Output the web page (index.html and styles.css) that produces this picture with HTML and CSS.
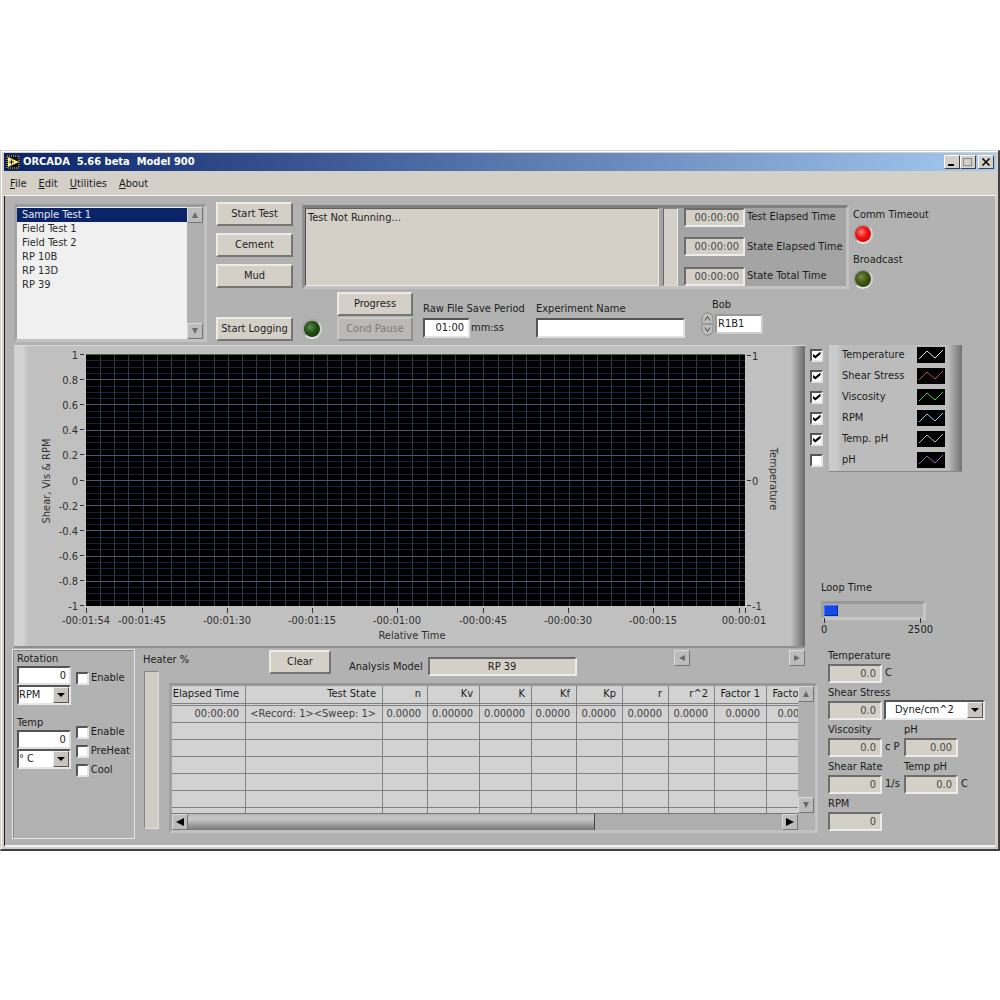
FILE: index.html
```html
<!DOCTYPE html>
<html lang="en">
<head>
<meta charset="utf-8">
<meta name="viewport" content="width=device-width, initial-scale=1">
<title>ORCADA 5.66 beta Model 900</title>
<link rel="stylesheet" href="styles.css">
</head>
<body>
<div class="window">
  <header class="titlebar">
    <svg class="app-icon" width="14" height="14" viewBox="0 0 14 14" aria-hidden="true">
      <rect width="14" height="14" fill="#111"/>
      <rect x="1" y="1" width="12" height="12" fill="none" stroke="#e8e4b0" stroke-dasharray="1 1"/>
      <path d="M2 2v10l11-5z" fill="#f4ef8a"/>
      <path d="M3 7h5M5.500 4.500v5" stroke="#222"/>
    </svg>
    <h1 class="title">ORCADA  5.66 beta  Model 900</h1>
    <button class="win-btn" aria-label="Minimize"><svg width="12" height="10" viewBox="0 0 12 10"><path d="M2 7h6v2H2z"/></svg></button>
    <button class="win-btn" aria-label="Maximize"><svg width="12" height="10" viewBox="0 0 12 10"><path d="M1 1.500h9M1.500 1v8M9.500 1v8M1 8.500h9" stroke="#8c8c88" fill="none"/></svg></button>
    <button class="win-btn win-close" aria-label="Close"><svg width="12" height="10" viewBox="0 0 12 10"><path d="M2.500 1.500l7 7M9.500 1.500l-7 7" stroke="#000" stroke-width="1.500"/></svg></button>
  </header>
  <nav class="menubar">
    <a href="#file"><u>F</u>ile</a>
    <a href="#edit"><u>E</u>dit</a>
    <a href="#utilities"><u>U</u>tilities</a>
    <a href="#about"><u>A</u>bout</a>
  </nav>

  <main class="client">
    <section class="top">
      <div class="listbox">
        <select size="9" aria-label="Tests">
          <option selected>Sample Test 1</option>
          <option>Field Test 1</option>
          <option>Field Test 2</option>
          <option>RP 10B</option>
          <option>RP 13D</option>
          <option>RP 39</option>
        </select>
        <div class="vscroll">
          <button class="arrow dim" aria-label="Scroll up"><svg width="8" height="8" viewBox="0 0 8 8"><path d="M4 1l3 6H1z"/></svg></button>
          <button class="arrow dim" aria-label="Scroll down"><svg width="8" height="8" viewBox="0 0 8 8"><path d="M4 7L1 1h6z"/></svg></button>
        </div>
      </div>

      <div class="commands">
        <button class="btn">Start Test</button>
        <button class="btn">Cement</button>
        <button class="btn">Mud</button>
        <button class="btn last">Start Logging</button>
      </div>

      <div class="center">
        <div class="status">
          <div class="status-text">Test Not Running...</div>
          <div class="status-bar"></div>
          <div class="times">
            <div><output id="t1" class="field">00:00:00</output><label for="t1">Test Elapsed Time</label></div>
            <div><output id="t2" class="field">00:00:00</output><label for="t2">State Elapsed Time</label></div>
            <div><output id="t3" class="field">00:00:00</output><label for="t3">State Total Time</label></div>
          </div>
        </div>
        <div class="controls">
          <span class="led green"></span>
          <div class="pair">
            <button class="btn">Progress</button>
            <button class="btn" disabled>Cond Pause</button>
          </div>
          <div class="group period">
            <label for="period">Raw File Save Period</label>
            <div class="inline"><input id="period" class="edit" value="01:00"><span>mm:ss</span></div>
          </div>
          <div class="group name">
            <label for="name">Experiment Name</label>
            <input id="name" class="edit">
          </div>
          <div class="group bob">
            <label for="bob">Bob</label>
            <div class="inline">
              <svg class="spin" width="13" height="24" viewBox="0 0 13 24" aria-hidden="true">
                <rect x="1" y="1" width="11" height="22" rx="5" fill="#bcbcbc" stroke="#8a8a8a"/>
                <path d="M2 12h9" stroke="#777"/>
                <path d="M4 8.500l2.500-4 2.500 4M4 15.500l2.500 4 2.500-4" fill="none" stroke="#444"/>
              </svg>
              <input id="bob" class="edit" value="R1B1">
            </div>
          </div>
        </div>
      </div>

      <div class="leds">
        <span>Comm Timeout</span>
        <span class="led red"></span>
        <span>Broadcast</span>
        <span class="led olive"></span>
      </div>
    </section>

    <section class="middle">
      <div class="chart">
        <svg viewBox="0 0 791 302" role="img" aria-label="Shear, Vis &amp; RPM against relative time">
          <rect x="72" y="9" width="659" height="252" fill="#000"/>
          <g id="grid"></g>
          <path d="M72 9.500h659" stroke="#3d6b3d"/>
          <path id="ticks" stroke="#333" fill="none"/>
          <g class="left-scale">
            <text x="64" y="14">1</text><text x="64" y="39">0.8</text><text x="64" y="64">0.6</text>
            <text x="64" y="89">0.4</text><text x="64" y="114">0.2</text><text x="64" y="140">0</text>
            <text x="64" y="165">-0.2</text><text x="64" y="190">-0.4</text><text x="64" y="215">-0.6</text>
            <text x="64" y="240">-0.8</text><text x="64" y="265">-1</text>
          </g>
          <g>
            <text x="738" y="15">1</text><text x="738" y="140">0</text><text x="738" y="265">-1</text>
          </g>
          <g class="time-scale">
            <text x="72" y="279">-00:01:54</text><text x="128" y="279">-00:01:45</text>
            <text x="213" y="279">-00:01:30</text><text x="298" y="279">-00:01:15</text>
            <text x="383" y="279">-00:01:00</text><text x="469" y="279">-00:00:45</text>
            <text x="554" y="279">-00:00:30</text><text x="639" y="279">-00:00:15</text>
            <text x="730" y="279">00:00:01</text>
            <text x="398" y="294">Relative Time</text>
            <text transform="translate(36 136) rotate(-90)">Shear, Vis &amp; RPM</text>
            <text transform="translate(756 134) rotate(90)">Temperature</text>
          </g>
        </svg>
      </div>
      <div class="side">
        <div class="legend">
          <div class="checks">
            <input type="checkbox" id="p1" checked><input type="checkbox" id="p2" checked>
            <input type="checkbox" id="p3" checked><input type="checkbox" id="p4" checked>
            <input type="checkbox" id="p5" checked><input type="checkbox" id="p6">
          </div>
          <div class="plots">
            <label for="p1">Temperature<svg viewBox="0 0 28 16"><path d="M2 12l8-8 8 7 8-8" stroke="#e0e0e0"/></svg></label>
            <label for="p2">Shear Stress<svg viewBox="0 0 28 16"><path d="M2 12l8-8 8 7 8-8" stroke="#c04848"/></svg></label>
            <label for="p3">Viscosity<svg viewBox="0 0 28 16"><path d="M2 12l8-8 8 7 8-8" stroke="#48d048"/></svg></label>
            <label for="p4">RPM<svg viewBox="0 0 28 16"><path d="M2 12l8-8 8 7 8-8" stroke="#88c8f0"/></svg></label>
            <label for="p5">Temp. pH<svg viewBox="0 0 28 16"><path d="M2 12l8-8 8 7 8-8" stroke="#b8b8a8"/></svg></label>
            <label for="p6">pH<svg viewBox="0 0 28 16"><path d="M2 12l8-8 8 7 8-8" stroke="#9868c0"/></svg></label>
          </div>
        </div>
        <div class="loop">
          <span>Loop Time</span>
          <div class="slide"><i></i></div>
          <div class="slide-scale"><span>0</span><span>2500</span></div>
        </div>
      </div>
    </section>

    <section class="bottom">
      <div class="setpoints">
        <div class="setpoint">
          <div>
            <label for="rot">Rotation</label>
            <input id="rot" class="edit num" value="0">
            <div class="combo"><select aria-label="Rotation unit"><option>RPM</option></select><span></span></div>
          </div>
          <div class="options one">
            <label><input type="checkbox">Enable</label>
          </div>
        </div>
        <div class="setpoint">
          <div>
            <label for="temp">Temp</label>
            <input id="temp" class="edit num" value="0">
            <div class="combo"><select aria-label="Temperature unit"><option>° C</option></select><span></span></div>
          </div>
          <div class="options">
            <label><input type="checkbox">Enable</label>
            <label><input type="checkbox">PreHeat</label>
            <label><input type="checkbox">Cool</label>
          </div>
        </div>
      </div>

      <div class="heater">
        <span>Heater %</span>
        <div class="heater-bar"></div>
      </div>

      <div class="analysis">
        <div class="analysis-head">
          <button class="btn">Clear</button>
          <label for="model">Analysis Model</label>
          <output id="model" class="field">RP 39</output>
          <div class="chart-scroll">
            <button class="arrow dim" aria-label="Scroll left"><svg width="8" height="8" viewBox="0 0 8 8"><path d="M1 4l6-3v6z"/></svg></button>
            <button class="arrow dim" aria-label="Scroll right"><svg width="8" height="8" viewBox="0 0 8 8"><path d="M7 4L1 1v6z"/></svg></button>
          </div>
        </div>
        <div class="grid-frame">
          <div class="grid-view">
            <table>
              <colgroup><col class="c74"><col class="c137"><col class="c45"><col class="c52"><col class="c52"><col class="c45"><col class="c46"><col class="c46"><col class="c46"><col class="c52"><col class="c52"></colgroup>
              <thead><tr><th>Elapsed Time</th><th>Test State</th><th>n</th><th>Kv</th><th>K</th><th>Kf</th><th>Kp</th><th>r</th><th>r^2</th><th>Factor 1</th><th>Factor 2</th></tr></thead>
              <tbody>
                <tr><td>00:00:00</td><td>&lt;Record: 1&gt;&lt;Sweep: 1&gt;</td><td>0.0000</td><td>0.00000</td><td>0.00000</td><td>0.0000</td><td>0.0000</td><td>0.0000</td><td>0.0000</td><td>0.0000</td><td>0.0000</td></tr>
                <tr><td></td><td></td><td></td><td></td><td></td><td></td><td></td><td></td><td></td><td></td><td></td></tr>
                <tr><td></td><td></td><td></td><td></td><td></td><td></td><td></td><td></td><td></td><td></td><td></td></tr>
                <tr><td></td><td></td><td></td><td></td><td></td><td></td><td></td><td></td><td></td><td></td><td></td></tr>
                <tr><td></td><td></td><td></td><td></td><td></td><td></td><td></td><td></td><td></td><td></td><td></td></tr>
                <tr><td></td><td></td><td></td><td></td><td></td><td></td><td></td><td></td><td></td><td></td><td></td></tr>
                <tr><td></td><td></td><td></td><td></td><td></td><td></td><td></td><td></td><td></td><td></td><td></td></tr>
              </tbody>
            </table>
          </div>
          <div class="vscroll">
            <button class="arrow dim" aria-label="Scroll up"><svg width="8" height="8" viewBox="0 0 8 8"><path d="M4 1l3 6H1z"/></svg></button>
            <button class="arrow dim" aria-label="Scroll down"><svg width="8" height="8" viewBox="0 0 8 8"><path d="M4 7L1 1h6z"/></svg></button>
          </div>
          <div class="hscroll">
            <button class="arrow" aria-label="Scroll left"><svg width="8" height="8" viewBox="0 0 8 8"><path d="M0 4l8-4v8z"/></svg></button>
            <i></i>
            <button class="arrow" aria-label="Scroll right"><svg width="8" height="8" viewBox="0 0 8 8"><path d="M8 4L0 0v8z"/></svg></button>
          </div>
        </div>
      </div>

      <div class="readouts">
        <div class="row">
          <div class="reading"><label for="r1">Temperature</label><div><output id="r1" class="field">0.0</output>C</div></div>
        </div>
        <div class="row">
          <div class="reading"><label for="r2">Shear Stress</label><div><output id="r2" class="field">0.0</output></div></div>
          <div class="combo wide"><select aria-label="Shear stress unit"><option>Dyne/cm^2</option></select><span></span></div>
        </div>
        <div class="row">
          <div class="reading"><label for="r3">Viscosity</label><div><output id="r3" class="field">0.0</output>c P</div></div>
          <div class="reading"><label for="r4">pH</label><div><output id="r4" class="field">0.00</output></div></div>
        </div>
        <div class="row">
          <div class="reading"><label for="r5">Shear Rate</label><div><output id="r5" class="field">0</output>1/s</div></div>
          <div class="reading"><label for="r6">Temp pH</label><div><output id="r6" class="field">0.0</output>C</div></div>
        </div>
        <div class="row">
          <div class="reading"><label for="r7">RPM</label><div><output id="r7" class="field">0</output></div></div>
        </div>
      </div>
    </section>
  </main>
</div>
<script src="script.js"></script>
</body>
</html>
```
FILE: styles.css
```css
* { box-sizing: border-box; }

body {
  margin: 0;
  min-height: 100vh;
  display: flex;
  align-items: center;
  background: #fff;
  color: #1c1c1c;
}

body, button, input, select, table {
  font: 11px/14px "DejaVu Sans Condensed", Tahoma, "DejaVu Sans", sans-serif;
}

label, span, output { white-space: nowrap; }
svg { display: block; }

.window {
  flex: 1;
  min-width: 1000px;
  padding: 2px;
  background: #d4d0c8;
  border: 1px solid #d4d0c8;
  border-right: 2px solid #404040;
  border-bottom: 2px solid #404040;
  box-shadow: inset 1px 1px #fff;
}

/* title and menu */
.titlebar {
  display: flex;
  align-items: center;
  height: 18px;
  margin-left: 1px;
  padding: 0 2px;
  background: linear-gradient(90deg, #0a246a, #a6caf0);
}
.title {
  flex: 1;
  margin: 0 0 0 3px;
  font-size: 11px;
  line-height: 14px;
  font-weight: bold;
  color: #fff;
  white-space: pre;
}
.win-btn {
  width: 16px;
  height: 14px;
  padding: 0;
  display: grid;
  place-items: center;
  background: #d4d0c8;
  border: 1px solid;
  border-color: #fff #404040 #404040 #fff;
}
.win-close { margin-left: 2px; }
.menubar {
  display: flex;
  gap: 12px;
  height: 25px;
  padding: 6px 7px;
  border-bottom: 1px solid #f4f4f0;
}
.menubar a { color: #1c1c1c; text-decoration: none; }

.client {
  margin: 0 1px 0 1px;
  background: #b2b2b2;
  border-left: 1px solid #222;
  border-bottom: 2px solid #f4f4f4;
}

/* shared controls */
.btn {
  height: 24px;
  padding: 0;
  color: #1c1c1c;
  background: #d4d0c8;
  border: 2px solid;
  border-color: #ecebe6 #77756f #77756f #ecebe6;
}
.btn:disabled {
  color: #7c7c7c;
  background: #bab9b6;
  border-color: #c8c8c6 #8f8f8f #8f8f8f #c8c8c6;
}
.field {
  display: block;
  height: 19px;
  padding: 1px 4px;
  color: #484848;
  background: #d4d0c8;
  border: 2px solid;
  border-color: #6c6c6c #ececec #ececec #6c6c6c;
  text-align: right;
}
.edit {
  height: 20px;
  padding: 0 4px;
  background: #fff;
  color: #1c1c1c;
  border: 2px solid;
  border-color: #555 #e0e0e0 #e0e0e0 #555;
  border-radius: 0;
  min-width: 0;
}
.combo {
  display: flex;
  align-items: center;
  height: 20px;
  background: #fff;
  border: 2px solid;
  border-color: #555 #e8e8e8 #e8e8e8 #555;
}
.combo select {
  flex: 1;
  min-width: 0;
  appearance: none;
  border: 0;
  padding: 0;
  background: #fff;
  color: #1c1c1c;
}
.combo span {
  width: 16px;
  height: 16px;
  display: grid;
  place-items: center;
  background: #c8c5be;
  border: 1px solid;
  border-color: #eee #555 #555 #eee;
}
.combo span::before {
  content: "";
  border: 4px solid transparent;
  border-top-color: #000;
  border-bottom: 0;
}
.arrow {
  flex: none;
  width: 16px;
  height: 16px;
  padding: 0;
  display: grid;
  place-items: center;
  background: #bcbcbc;
  border: 1px solid;
  border-color: #dcdcdc #757575 #757575 #dcdcdc;
}
.arrow.dim { fill: #6a6a6a; }
.vscroll {
  display: flex;
  flex-direction: column;
  justify-content: space-between;
  width: 17px;
  background: #b0b0b0;
}
input[type="checkbox"] {
  appearance: none;
  flex: none;
  width: 13px;
  height: 13px;
  margin: 0;
  background: #fff;
  border: 2px solid;
  border-color: #555 #e4e4e4 #e4e4e4 #555;
  display: grid;
  place-items: center;
}
input[type="checkbox"]:checked::before {
  content: "";
  width: 8px;
  height: 7px;
  background: #000;
  clip-path: polygon(0 30%, 35% 62%, 100% 0, 100% 40%, 35% 100%, 0 68%);
}
.led {
  width: 20px;
  height: 20px;
  border-radius: 50%;
  border: 2px solid;
  border-color: #a4a4a4 #d4d4d4 #e8e8e8 #a4a4a4;
}
.green { background: radial-gradient(circle at 40% 38%, #5d8a50, #1f4d12 45%, #12300a); }
.red { background: radial-gradient(circle at 40% 38%, #ff8080, #f01414 40%, #c80000); }
.olive { background: radial-gradient(circle at 40% 38%, #768a4c, #3d5412 45%, #26380a); }

/* top band */
.top {
  display: flex;
  align-items: flex-start;
  height: 149px;
  padding: 6px 9px 0;
}
.listbox {
  display: flex;
  width: 193px;
  height: 138px;
  margin-top: 2px;
  border: 3px solid;
  border-color: #9c9c9c #c2c2c2 #c2c2c2 #a4a4a4;
}
.listbox select {
  flex: 1;
  min-width: 0;
  padding: 1px 0;
  border: 0;
  border-radius: 0;
  outline: 0;
  overflow: hidden;
  background: #f0f0f0;
}
.listbox option {
  min-height: 14px;
  padding: 0 5px;
  line-height: 14px;
  color: #2c2c2c;
}
.listbox option:checked { background: #0a246a linear-gradient(#0a246a, #0a246a); color: #e8e8f0; }
.commands {
  display: flex;
  flex-direction: column;
  gap: 7px;
  width: 77px;
  height: 139px;
  margin-left: 9px;
}
.commands .last { margin-top: auto; }
.center { flex: 1; margin-left: 9px; }
.status {
  display: flex;
  height: 84px;
  margin-top: 3px;
  background: #a4a4a4;
  border: 3px solid;
  border-color: #808080 #c2c2c2 #c2c2c2 #909090;
}
.status-text {
  flex: 1;
  padding: 2px;
  background: #d4d0c8;
  border: 1px solid;
  border-color: #606060 #eee #eee #505050;
}
.status-bar {
  width: 15px;
  margin: 0 6px 0 4px;
  background: #d4d0c8;
  border: 1px solid;
  border-color: #888 #eee #ddd #666;
}
.times {
  display: flex;
  flex-direction: column;
  justify-content: space-between;
  width: 162px;
}
.times div { display: flex; align-items: center; gap: 2px; }
.times .field { width: 61px; }
.controls {
  display: flex;
  align-items: flex-start;
  padding-top: 3px;
}
.controls .led { margin: 27px 15px 0 0; }
.pair { display: flex; flex-direction: column; gap: 1px; width: 76px; }
.group { display: flex; flex-direction: column; gap: 2px; padding-top: 10px; }
.inline { display: flex; align-items: center; gap: 1px; }
.period { width: 104px; margin-left: 10px; }
.period .edit { width: 47px; text-align: right; }
.name { flex: 1; max-width: 149px; margin-left: 9px; }
.bob { padding-top: 6px; gap: 0; margin-left: 16px; }
.bob label { padding-left: 11px; }
.bob .edit { width: 48px; padding: 0 1px; border-color: #999 #ccc #ccc #999; }
.leds {
  display: flex;
  flex-direction: column;
  width: 133px;
  padding-top: 6px;
  margin-left: 4px;
}
.leds .led { margin: 2px 0 9px; }

/* chart and legend */
.middle { display: flex; padding-left: 9px; }
.chart {
  flex: 1;
  background: linear-gradient(90deg, #d2d2d2 9px, #c0c0c0 14px, #c0c0c0 calc(100% - 14px), #686868);
  border-top: 1px solid #d8d8d8;
  border-bottom: 2px solid #8e8e8e;
}
.chart svg { width: 100%; height: auto; margin: -1px 0; }
.chart text { font-size: 11px; fill: #303030; }
.left-scale { text-anchor: end; }
.time-scale { text-anchor: middle; }
.side {
  display: flex;
  flex-direction: column;
  justify-content: space-between;
  width: 190px;
  padding: 0 0 11px 5px;
}
.legend { display: flex; gap: 6px; }
.checks {
  display: grid;
  grid-auto-rows: 21px;
  align-items: center;
}
.plots {
  width: 133px;
  display: grid;
  grid-auto-rows: 21px;
  padding: 0 17px 0 13px;
  background: linear-gradient(90deg, #cbcbcb 8px, #bcbcbc 12px, #bcbcbc calc(100% - 14px), #727272);
  border-bottom: 1px solid #888;
}
.plots label { display: flex; justify-content: space-between; align-items: center; }
.plots svg { width: 28px; height: 16px; background: #000; fill: none; }
.loop { width: 112px; margin-left: 11px; }
.slide {
  width: 105px;
  height: 19px;
  margin-top: 6px;
  border: 3px solid;
  border-color: #989898 #c6c6c6 #c6c6c6 #a0a0a0;
}
.slide i {
  display: block;
  width: 14px;
  height: 11px;
  margin-top: 1px;
  background: #1448e8;
  border: 1px solid;
  border-color: #3c70ff #0828a0 #0828a0 #3c70ff;
}
.slide-scale { display: flex; justify-content: space-between; }
.slide-scale span::before {
  content: "";
  display: block;
  width: 1px;
  height: 5px;
  margin: -2px auto 0;
  background: #333;
}

/* bottom band */
.bottom { display: flex; padding: 1px 0 6px 7px; }
.setpoints {
  width: 123px;
  min-height: 190px;
  padding: 2px 4px;
  border: 1px solid #e4e4e4;
  box-shadow: inset 1px 1px #888;
}
.setpoint {
  display: flex;
  gap: 5px;
  height: 64px;
}
.setpoint > div:first-child { width: 54px; }
.setpoint label { display: block; }
.setpoint .num { display: block; width: 100%; height: 19px; text-align: right; padding: 0 3px; }
.options { padding-top: 7px; }
.options label { display: flex; align-items: center; gap: 2px; height: 19px; }
.options.one { padding-top: 17px; }
.heater { width: 26px; margin-left: 8px; padding-top: 4px; }
.heater-bar {
  width: 15px;
  height: 158px;
  margin-top: 4px;
  margin-left: 1px;
  background: #d0ccc6;
  border: 1px solid;
  border-color: #888 #ddd #ddd #888;
}
.analysis { flex: 1; min-width: 0; }
.analysis-head {
  display: flex;
  align-items: flex-start;
  height: 34px;
  padding: 1px 13px 0 100px;
}
.analysis-head .btn { width: 62px; }
.analysis-head label { margin: 10px 5px 0 18px; }
.analysis-head .field { width: 149px; margin-top: 7px; text-align: center; color: #1c1c1c; }
.chart-scroll { display: flex; justify-content: space-between; width: 131px; margin-left: auto; }
.grid-frame {
  display: grid;
  grid-template-columns: 1fr 17px;
  grid-template-rows: 127px 17px;
  border: 3px solid;
  border-color: #989898 #c2c2c2 #c2c2c2 #a0a0a0;
}
.grid-view { overflow: hidden; background: #d2d2d2; }
table {
  width: 647px;
  min-width: 100%;
  table-layout: fixed;
  border-collapse: separate;
  border-spacing: 0;
}
.c45 { width: 45px; }
.c46 { width: 46px; }
.c52 { width: 52px; }
.c74 { width: 74px; }
.c137 { width: 137px; }
th, td {
  height: 17px;
  padding: 1px 6px 0 0;
  text-align: right;
  font-weight: normal;
  white-space: nowrap;
  border-right: 1px solid #808080;
  border-bottom: 1px solid #808080;
}
th { height: 19px; padding-bottom: 2px; border-bottom: 3px double #808080; }
td { color: #404040; }
.hscroll { display: flex; background: #aeaeae; border-top: 1px solid #777; }
.hscroll i {
  width: 65%;
  margin-right: auto;
  background: linear-gradient(#b8b8b8, #c8c8c8 30%, #777);
  border-right: 1px solid #444;
}

.readouts {
  display: flex;
  flex-direction: column;
  gap: 3px;
  width: 167px;
  margin-left: 10px;
}
.row { display: flex; align-items: flex-end; gap: 3px; height: 34px; }
.reading { width: 73px; }
.reading label { display: block; }
.reading div { display: flex; align-items: center; gap: 3px; margin-top: 1px; }
.reading .field { width: 54px; }
.row .wide { width: 101px; margin-left: -20px; }
.wide select { padding-left: 9px; }
```
FILE: script.js
```js
// Draws the chart's grid lines and scale ticks.
const plot = { left: 72, right: 731, top: 9, bottom: 261 };
let minor = "";
let major = "";
for (let i = 1; i < 40; i++) {
  const y = Math.round(plot.top + (plot.bottom - plot.top) * i / 40) + 0.5;
  const line = `M${plot.left} ${y}H${plot.right}`;
  if (i % 4 === 0) major += line; else minor += line;
}
let columns = "";
for (let i = 0; i < 46; i++) {
  const x = Math.round(86 + 14.2 * i) + 0.5;
  if (x < plot.right) columns += `M${x} ${plot.top}V${plot.bottom}`;
}
document.getElementById("grid").innerHTML =
  `<path d="${minor}" stroke="#1f1f40"/>` +
  `<path d="${columns}" stroke="#383844"/>` +
  `<path d="${major}" stroke="#505474"/>`;

let ticks = "";
for (let i = 0; i <= 10; i++) {
  ticks += `M66 ${Math.round(plot.top + 25.1 * i) + 0.5}h4`;
}
for (const y of [10.5, 135.5, 260.5]) ticks += `M733 ${y}h4`;
for (const x of [72, 128, 213, 298, 383, 469, 554, 639, 725, 731]) ticks += `M${x + 0.5} 263v5`;
document.getElementById("ticks").setAttribute("d", ticks);
```
